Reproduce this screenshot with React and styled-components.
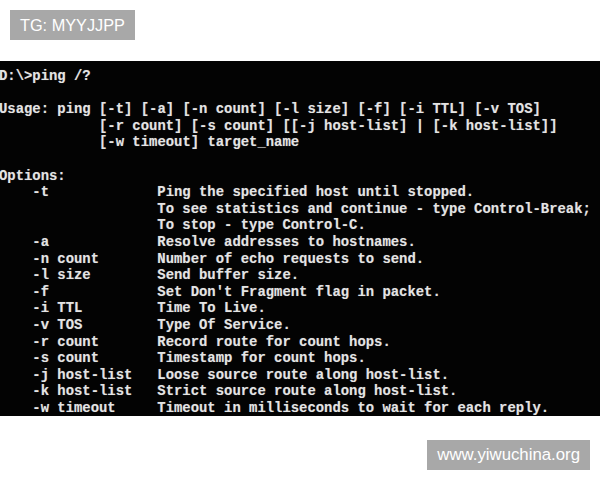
import styled, { createGlobalStyle } from "styled-components";

const GlobalStyle = createGlobalStyle`
  html, body {
    margin: 0;
    padding: 0;
    background: #ffffff;
  }
`;

const Page = styled.div`
  width: 600px;
  height: 480px;
  display: flex;
  flex-direction: column;
  background: #ffffff;
  overflow: hidden;
`;

const Tag = styled.div`
  align-self: ${(p) => (p.$right ? "flex-end" : "flex-start")};
  margin: ${(p) => (p.$right ? "24px 10px 0 0" : "10px 0 0 10px")};
  height: 30px;
  padding: 0 10px;
  display: flex;
  align-items: center;
  background: #a8a8a8;
  color: #ffffff;
  font-family: "Liberation Sans", Arial, sans-serif;
  font-size: ${(p) => (p.$right ? "16.8px" : "16.3px")};
`;

const Console = styled.div`
  margin-top: 21px;
  height: 355px;
  background: #030303;
  padding: 7px 0 0 0;
  box-sizing: border-box;
  color: #e4e4e4;
  font-family: "Liberation Mono", "Courier New", monospace;
  font-weight: bold;
  font-size: 13.9px;
  line-height: 16.6px;
  text-shadow: 0 0 1px rgba(255, 255, 255, 0.35);
  overflow: hidden;
`;

const Line = styled.div`
  white-space: pre;
  height: 16.6px;
  margin-left: -1px;
`;

const OptionRow = styled.div`
  display: grid;
  grid-template-columns: 15ch auto;
  padding-left: 4ch;
  white-space: pre;
  height: 16.6px;
  margin-left: -1px;
`;

const usage = [
  "D:\\>ping /?",
  "",
  "Usage: ping [-t] [-a] [-n count] [-l size] [-f] [-i TTL] [-v TOS]",
  "            [-r count] [-s count] [[-j host-list] | [-k host-list]]",
  "            [-w timeout] target_name",
  "",
  "Options:",
];

const options = [
  ["-t", "Ping the specified host until stopped."],
  ["", "To see statistics and continue - type Control-Break;"],
  ["", "To stop - type Control-C."],
  ["-a", "Resolve addresses to hostnames."],
  ["-n count", "Number of echo requests to send."],
  ["-l size", "Send buffer size."],
  ["-f", "Set Don't Fragment flag in packet."],
  ["-i TTL", "Time To Live."],
  ["-v TOS", "Type Of Service."],
  ["-r count", "Record route for count hops."],
  ["-s count", "Timestamp for count hops."],
  ["-j host-list", "Loose source route along host-list."],
  ["-k host-list", "Strict source route along host-list."],
  ["-w timeout", "Timeout in milliseconds to wait for each reply."],
];

const App = () => {
  return (
    <>
      <GlobalStyle />
      <Page>
        <Tag>TG: MYYJJPP</Tag>
        <Console>
          {usage.map((text, i) => (
            <Line key={i}>{text}</Line>
          ))}
          {options.map(([flag, desc], i) => (
            <OptionRow key={i}>
              <span>{flag}</span>
              <span>{desc}</span>
            </OptionRow>
          ))}
        </Console>
        <Tag $right>www.yiwuchina.org</Tag>
      </Page>
    </>
  );
};

export default App;
